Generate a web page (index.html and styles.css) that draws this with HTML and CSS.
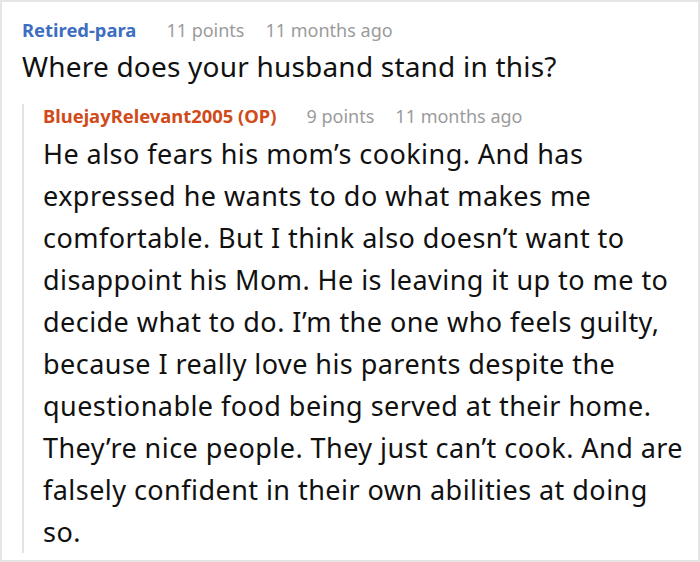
FILE: index.html
```html
<!DOCTYPE html>
<html>
<head>
<meta charset="utf-8">
<link rel="stylesheet" href="styles.css">
</head>
<body>
<div class="frame">
  <div class="comment">
    <div class="meta">
      <span class="author author-blue">Retired-para</span>
      <span class="info">11 points</span>
      <span class="info">11 months ago</span>
    </div>
    <p class="text text-top">Where does your husband stand in this?</p>
    <div class="reply">
      <div class="meta">
        <span class="author author-op">BluejayRelevant2005 (OP)</span>
        <span class="info">9 points</span>
        <span class="info">11 months ago</span>
      </div>
      <p class="text text-reply">He also fears his mom’s cooking. And has<br>expressed he wants to do what makes me<br>comfortable. But I think also doesn’t want to<br>disappoint his Mom. He is leaving it up to me to<br>decide what to do. I’m the one who feels guilty,<br>because I really love his parents despite the<br>questionable food being served at their home.<br>They’re nice people. They just can’t cook. And are<br>falsely confident in their own abilities at doing<br>so.</p>
    </div>
  </div>
</div>
</body>
</html>
```

FILE: styles.css
```css
html, body {
  margin: 0;
  padding: 0;
  background: #ffffff;
}
body {
  font-family: "Noto Sans", "Open Sans", sans-serif;
  color: #111;
}
.frame {
  width: 700px;
  height: 562px;
  box-sizing: border-box;
  border: 2px solid #e5e5e5;
  padding: 16px 0 0 20px;
  overflow: hidden;
}
.meta {
  display: flex;
  align-items: baseline;
  font-size: 18px;
  line-height: 24px;
  white-space: nowrap;
}
.author {
  font-weight: 700;
  font-size: 18.4px;
  margin-right: 30px;
}
.author-blue { color: #3d6ec0; }
.author-op { color: #d14a1a; }
.info {
  color: #9b9b9b;
  margin-right: 21px;
}
.text {
  margin: 0;
  line-height: 42px;
  color: #111;
  white-space: nowrap;
}
.text-top {
  margin-top: 3px;
  font-size: 28px;
  letter-spacing: 0.2px;
}
.reply {
  margin-top: 17px;
  border-left: 2px solid #e2e2e2;
  padding-left: 19px;
}
.text-reply {
  margin-top: 5px;
  margin-bottom: -16px;
  font-size: 27px;
  letter-spacing: 0.45px;
}
```
